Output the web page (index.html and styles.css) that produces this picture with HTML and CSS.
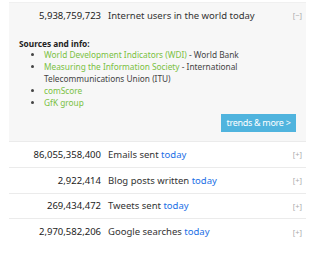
FILE: index.html
```html
<!DOCTYPE html>
<html lang="en">

<head>
    <meta charset="UTF-8">
    <meta name="viewport" content="width=device-width, initial-scale=1.0">
    <title>Internet Live Stats</title>
    <link rel="stylesheet" href="styles.css">
</head>

<body>

    <div class="counters">
        <!-- open counter with sources -->
        <div class="counter open">
            <div class="line">
                <span class="num">5,938,759,723</span>
                <span class="label">Internet users in the world today</span>
                <span class="toggle">[&minus;]</span>
            </div>
            <div class="sources">
                <div class="sources-title">Sources and info:</div>
                <ul>
                    <li><a href="#">World Development Indicators (WDI)</a> - World Bank</li>
                    <li><a href="#">Measuring the Information Society</a> <span>- International</span> <span>Telecommunications Union (ITU)</span></li>
                    <li><a href="#">comScore</a></li>
                    <li><a href="#">GfK group</a></li>
                </ul>
                <div class="more"><a class="btn" href="#">trends &amp; more &gt;</a></div>
            </div>
        </div>

        <div class="counter">
            <div class="line">
                <span class="num">86,055,358,400</span>
                <span class="label">Emails sent <a href="#">today</a></span>
                <span class="toggle">[+]</span>
            </div>
        </div>
        <div class="counter">
            <div class="line">
                <span class="num">2,922,414</span>
                <span class="label">Blog posts written <a href="#">today</a></span>
                <span class="toggle">[+]</span>
            </div>
        </div>
        <div class="counter">
            <div class="line">
                <span class="num">269,434,472</span>
                <span class="label">Tweets sent <a href="#">today</a></span>
                <span class="toggle">[+]</span>
            </div>
        </div>
        <div class="counter last">
            <div class="line">
                <span class="num">2,970,582,206</span>
                <span class="label">Google searches <a href="#">today</a></span>
                <span class="toggle">[+]</span>
            </div>
        </div>
    </div>

</body>

</html>
```

FILE: styles.css
```css
body {
    font-family: "Noto Sans", "Open Sans", sans-serif;
    margin: 0;
    background: #ffffff;
    color: #333333;
}

a {
    text-decoration: none;
}

.counters {
    width: 297px;
    margin: 2px 0 0 9px;
}

.counter {
    border-top: 1px solid #ebebeb;
}

.counter.open {
    background-color: #f7f7f7;
    border-top: 1px solid #f0f0f0;
}

.line {
    display: flex;
    align-items: center;
    height: 24.8px;
    font-size: 9.5px;
}

.open .line {
    height: 24px;
}

.num {
    width: 92px;
    text-align: right;
    color: #222222;
}

.label {
    margin-left: 7px;
    color: #333333;
}

.label a {
    color: #1b6fe6;
}

.toggle {
    margin-left: auto;
    margin-right: 4px;
    font-size: 7.5px;
    color: #aaaaaa;
}

.sources {
    padding: 11px 10px 9px 10px;
    font-size: 8.3px;
}

.sources-title {
    font-weight: bold;
    line-height: 11px;
    color: #222222;
}

.sources ul {
    margin: 0;
    padding-left: 25px;
    line-height: 12px;
    color: #444444;
}

.sources li a {
    color: #7ac143;
}

.more {
    display: flex;
    justify-content: flex-end;
    margin-top: 5px;
}

.btn {
    display: block;
    width: 75px;
    height: 18px;
    line-height: 18px;
    text-align: center;
    background-color: #50b4de;
    color: #ffffff;
    font-size: 9px;
    letter-spacing: -0.3px;
}
```
